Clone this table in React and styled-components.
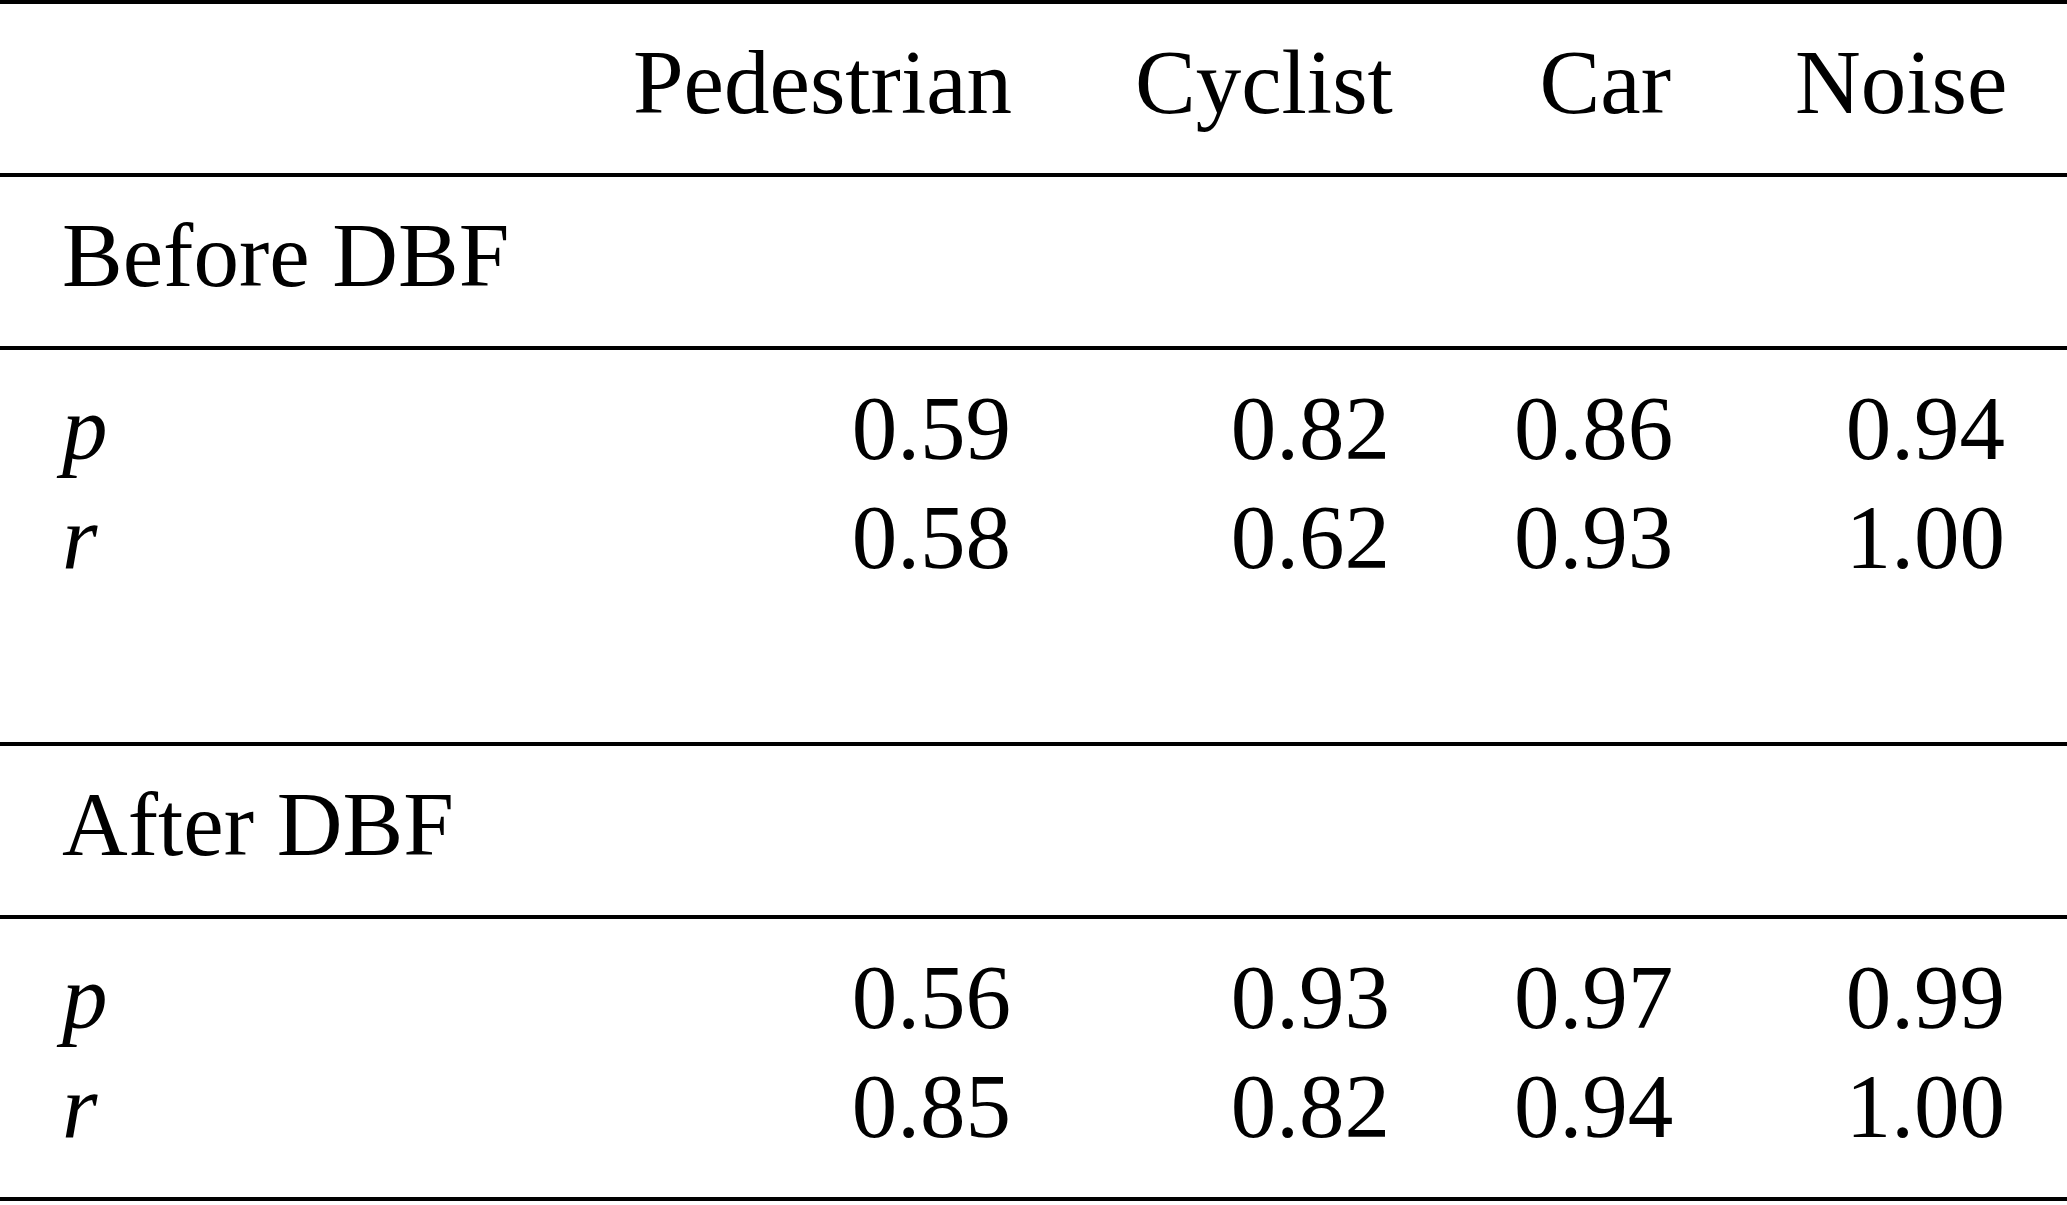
import styled, { createGlobalStyle } from "styled-components";

const GlobalStyle = createGlobalStyle`
  html, body {
    margin: 0;
    padding: 0;
    background: #ffffff;
  }
  body {
    font-family: "Liberation Serif", "Times New Roman", serif;
    color: #000000;
  }
`;

const columns = ["Pedestrian", "Cyclist", "Car", "Noise"];

const sections = [
  {
    title: "Before DBF",
    rows: [
      { label: "p", values: ["0.59", "0.82", "0.86", "0.94"] },
      { label: "r", values: ["0.58", "0.62", "0.93", "1.00"] },
    ],
    spacer: true,
  },
  {
    title: "After DBF",
    rows: [
      { label: "p", values: ["0.56", "0.93", "0.97", "0.99"] },
      { label: "r", values: ["0.85", "0.82", "0.94", "1.00"] },
    ],
  },
];

export default function App() {
  return (
    <>
      <GlobalStyle />
      <Table>
        <Group $top>
          <Row>
            <Cell />
            {columns.map((c) => (
              <Cell key={c} $num>{c}</Cell>
            ))}
          </Row>
        </Group>
        {sections.map((s) => (
          <div key={s.title}>
            <Group>
              <Row>
                <Cell>{s.title}</Cell>
              </Row>
            </Group>
            <Group>
              {s.rows.map((r) => (
                <Row key={r.label}>
                  <Cell>
                    <Var>{r.label}</Var>
                  </Cell>
                  {r.values.map((v, i) => (
                    <Cell key={i} $num>{v}</Cell>
                  ))}
                </Row>
              ))}
              {s.spacer && <Spacer />}
            </Group>
          </div>
        ))}
      </Table>
    </>
  );
}

const Table = styled.div`
  width: 2067px;
  font-size: 91px;
  line-height: 109px;
`;

const Group = styled.div`
  padding: 24px 0 36px;
  border-bottom: 4px solid #000;
  border-top: ${({ $top }) => ($top ? "4px solid #000" : "none")};
`;

const Row = styled.div`
  display: grid;
  grid-template-columns: 571px 502px 379px 281px 334px;
  height: 109px;
`;

const Cell = styled.div`
  padding: 0 62px;
  text-align: ${({ $num }) => ($num ? "right" : "left")};
  white-space: nowrap;
`;

const Var = styled.span`
  font-style: italic;
`;

const Spacer = styled.div`
  height: 114px;
`;
